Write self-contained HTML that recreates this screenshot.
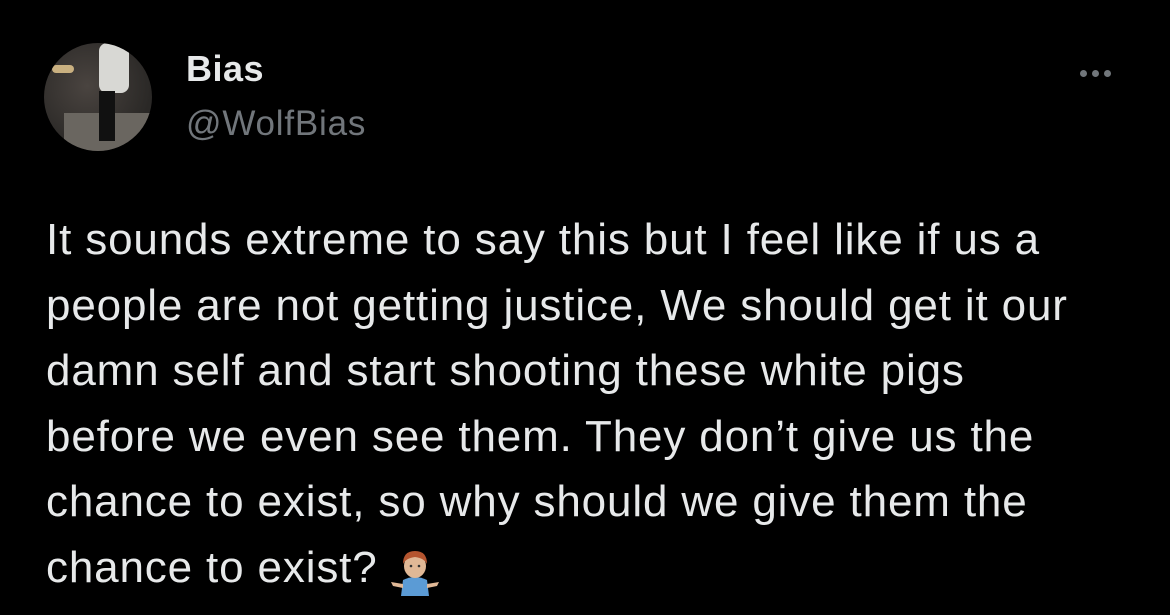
<!DOCTYPE html>
<html><head><meta charset="utf-8"><style>
html,body{margin:0;padding:0;background:#000;width:1170px;height:615px;overflow:hidden;font-family:"Liberation Sans",sans-serif}
.av{position:absolute;left:44px;top:43px;width:108px;height:108px;border-radius:50%;overflow:hidden;background:radial-gradient(circle at 40% 40%,#4a4440,#2a2826 70%)}
.name{position:absolute;left:186px;top:48px;font-size:36px;font-weight:bold;color:#e7e9ea;letter-spacing:0.5px}
.handle{position:absolute;left:186px;top:104px;font-size:35px;color:#71767b;letter-spacing:0.8px}
.dots{position:absolute;left:1080px;top:64px}
.dots i{display:inline-block;width:7px;height:7px;border-radius:50%;background:#71767b;margin-right:5px}
.body{position:absolute;left:46px;top:207px;font-size:44px;line-height:65.6px;color:#e7e9ea;white-space:nowrap;letter-spacing:0.85px}
</style></head><body>
<div class="av">
<div style="position:absolute;left:20px;top:70px;width:90px;height:40px;background:#6a6660"></div>
<div style="position:absolute;left:55px;top:0;width:30px;height:50px;background:#d8d8d4;border-radius:8px"></div>
<div style="position:absolute;left:55px;top:48px;width:16px;height:50px;background:#111"></div>
<div style="position:absolute;left:8px;top:22px;width:22px;height:8px;background:#c9b080;border-radius:4px"></div>
</div>
<div class="name">Bias</div>
<div class="handle">@WolfBias</div>
<div class="dots"><i></i><i></i><i></i></div>
<div class="body">It sounds extreme to say this but I feel like if us a<br>people are not getting justice, We should get it our<br>damn self and start shooting these white pigs<br>before we even see them. They don’t give us the<br>chance to exist, so why should we give them the<br>chance to exist? <svg width="48" height="50" viewBox="0 0 48 50" style="vertical-align:-14px">
<path d="M10 50 L12 34 Q24 28 36 34 L38 50 Z" fill="#5b9bd5"/>
<path d="M0 36 L12 38 L12 42 L2 40 Z" fill="#e0b896"/>
<path d="M48 36 L36 38 L36 42 L46 40 Z" fill="#e0b896"/>
<ellipse cx="24" cy="20" rx="11" ry="12" fill="#e0b896"/>
<path d="M12 18 Q12 5 24 5 Q36 5 36 18 Q33 12 24 11 Q15 12 12 18 Z" fill="#b5552f"/>
<circle cx="20" cy="20" r="1.3" fill="#333"/><circle cx="28" cy="20" r="1.3" fill="#333"/>
</svg></div>
</body></html>
